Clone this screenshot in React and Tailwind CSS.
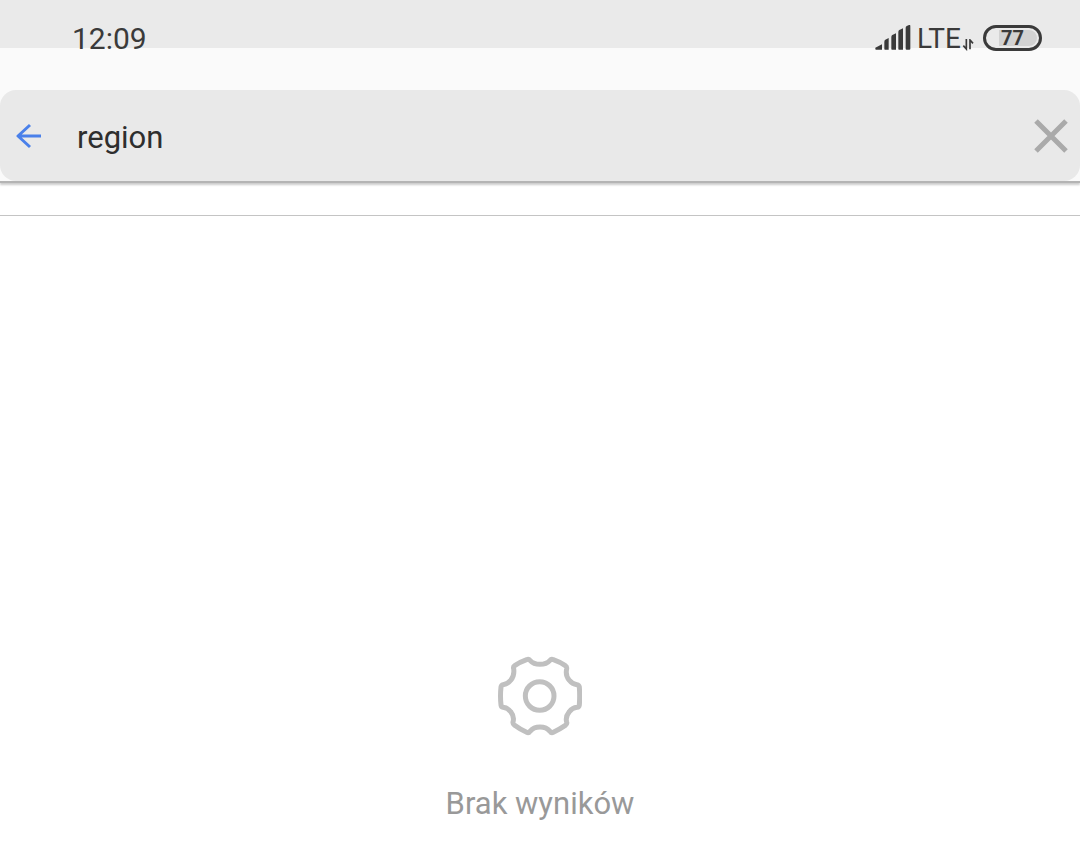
import { useState } from "react";

function SignalIcon() {
  return (
    <svg
      viewBox="0 0 108 78"
      className="w-9 h-[26px]"
      fill="#3a3a3a"
      aria-hidden="true"
    >
      <path d="M1 68 L21 58 V74 H3 Q0 74 1 68 Z" />
      <path d="M28 50 Q28 46 31 44 L41 39 V74 H30 Q28 74 28 72 Z" />
      <path d="M49 36 Q49 32 52 30 L63 25 V74 H51 Q49 74 49 72 Z" />
      <path d="M70 21 Q70 17 73 15 L84 10 V74 H72 Q70 74 70 72 Z" />
      <path d="M92 8 Q92 5 95 3 L102 0 Q106 -1 106 3 V71 Q106 74 103 74 H95 Q92 74 92 71 Z" />
    </svg>
  );
}

function DataArrowsIcon() {
  return (
    <svg
      viewBox="0 0 36 36"
      className="w-3.5 h-3"
      fill="none"
      stroke="#3a3a3a"
      strokeWidth="5"
      aria-hidden="true"
    >
      <path d="M13 0 V30 L4 20" />
      <path d="M24 31 V3 L33 13" />
    </svg>
  );
}

function BackIcon() {
  return (
    <svg
      viewBox="0 0 26 26"
      className="w-[26px] h-[26px]"
      fill="none"
      stroke="#4a80ea"
      strokeWidth="3"
      strokeLinejoin="round"
      aria-hidden="true"
    >
      <path d="M25 13 H2 M14 2 L2 13 L14 24" />
    </svg>
  );
}

function ClearIcon() {
  return (
    <svg
      viewBox="0 0 34 34"
      className="w-[34px] h-[34px]"
      fill="none"
      stroke="#aaaaaa"
      strokeWidth="5"
      aria-hidden="true"
    >
      <path d="M2 2 L32 32 M32 2 L2 32" />
    </svg>
  );
}

function GearIcon() {
  return (
    <svg
      viewBox="54 48 252 240"
      className="w-[84px] h-20"
      fill="none"
      stroke="#c0c0c0"
      strokeWidth="15"
      strokeLinejoin="round"
      aria-hidden="true"
    >
      <path d="M150 61 C158 70 166 73 180 73 C194 73 202 70 210 61 Q214 56 220 59 Q240 66 256 77 Q261 80 260 86 C257 100 260 112 268 121 C274 129 282 133 291 134 Q297 135 298 141 Q300 168 298 195 Q297 201 291 202 C282 203 274 207 268 215 C260 225 257 236 260 246 Q262 252 256 256 Q238 268 220 277 Q214 280 210 274 C202 264 194 261 180 261 C166 261 158 264 150 274 Q146 280 140 277 Q120 268 104 256 Q98 252 99 246 C102 236 100 225 92 215 C86 207 78 203 69 202 Q64 201 63 195 Q60 168 63 141 Q64 135 69 134 C78 133 86 129 92 121 C100 112 103 100 101 86 Q99 80 104 77 Q120 66 140 59 Q146 56 150 61 Z" />
      <circle cx="179" cy="168" r="43" />
    </svg>
  );
}

function StatusBar() {
  return (
    <div className="flex items-end justify-between h-[90px] pb-[39px] pl-[72px] pr-[38px] text-[#3a3a3a] bg-[linear-gradient(#eaeaea_48px,#fafafa_48px)]">
      <span className="text-[30px] leading-6">12:09</span>

      <div className="flex items-end">
        <SignalIcon />
        <span className="ml-1.5 text-[28px] leading-6">LTE</span>
        <DataArrowsIcon />
        <div className="ml-2 flex w-[59px] h-[26px] rounded-full border-3 border-[#3a3a3a] p-0.5">
          <div className="flex-1 rounded-full bg-[linear-gradient(90deg,transparent_22%,#d2d2d2_22%)] text-center text-xl leading-4 font-bold">
            77
          </div>
        </div>
      </div>
    </div>
  );
}

function SearchBar({ value, onChange }) {
  return (
    <div className="bg-[#fafafa] border-b-2 border-[#b4b4b4] shadow-[0_2px_2px_#cccccc]">
      <div className="flex items-center h-[91px] rounded-2xl bg-[#e9e9e9] pl-4 pr-3">
        <button type="button" aria-label="Wstecz">
          <BackIcon />
        </button>

        <input
          type="text"
          aria-label="Szukaj"
          value={value}
          onChange={(e) => onChange(e.target.value)}
          className="flex-1 min-w-0 ml-[35px] pt-1 text-[31px] leading-9 text-[#2e2e2e] outline-none"
        />

        <button
          type="button"
          aria-label="Wyczyść"
          onClick={() => onChange("")}
        >
          <ClearIcon />
        </button>
      </div>
    </div>
  );
}

function EmptyState() {
  return (
    <div className="flex flex-1 flex-col items-center justify-end pb-[34px]">
      <GearIcon />
      <p className="mt-[50px] text-[31px] leading-9 text-[#999999]">
        Brak wyników
      </p>
    </div>
  );
}

export default function App() {
  const [query, setQuery] = useState("region");

  return (
    <div className="flex flex-col min-h-screen bg-white font-[Roboto,sans-serif]">
      <header>
        <StatusBar />
        <SearchBar value={query} onChange={setQuery} />
      </header>

      <main className="mt-8 flex flex-1 flex-col border-t border-[#c4c4c4]">
        <EmptyState />
      </main>
    </div>
  );
}
